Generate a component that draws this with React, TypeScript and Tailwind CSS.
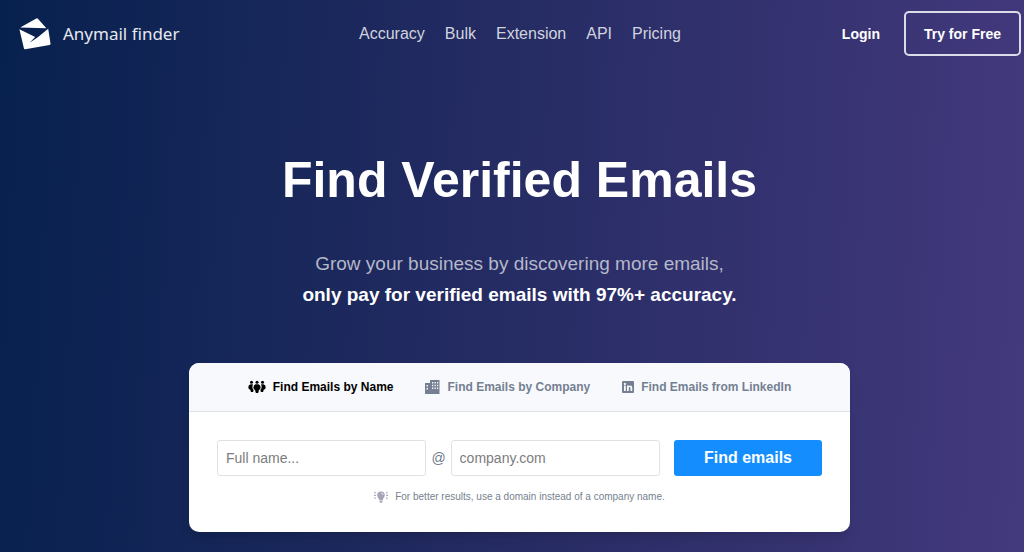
import React from "react";

const navLinks = ["Accuracy", "Bulk", "Extension", "API", "Pricing"];

function LogoMark() {
  return (
    <svg viewBox="0 0 32 32" className="h-8 w-8" fill="#fff" aria-hidden="true">
      <path d="M1.200 9.400 17.300.5q.9-.5 1.600.2L27.400 10.300Z" />
      <path d="M.4 11.200 16.200 19 10.600 24.700 18.800 19.200 29.200 10.800 31.500 25.600Q31.600 26.800 30.600 27L6.200 31.200Q5.100 31.300 4.900 30.300Z" />
    </svg>
  );
}

function PeopleIcon() {
  return (
    <svg viewBox="0 0 18 14" className="h-3.5 w-[18px]" fill="currentColor" aria-hidden="true">
      <circle cx="3.500" cy="2.200" r="1.500" />
      <circle cx="9" cy="2.200" r="1.500" />
      <circle cx="14.500" cy="2.200" r="1.500" />
      <path d="M2.700 4.300h1.800l.5.300q-.6 1-.6 2.400 0 2 1.100 3v1.200L4.700 12H2.900L2.300 9.800Q.3 9.400.3 7.300q0-2.700 2.400-3Z" />
      <path d="M15.300 4.300h-1.800l-.5.300q.6 1 .6 2.400 0 2-1.100 3v1.200l.8.800h1.800l.6-2.200q2-.4 2-2.500 0-2.700-2.400-3Z" />
      <path d="M7.500 4.300h3q2.100.7 2.100 3.200 0 2-1.700 2.600l-.5 2.400-.7.600H8.300l-.7-.6-.5-2.400Q5.400 9.500 5.400 7.500q0-2.500 2.100-3.200Z" />
    </svg>
  );
}

function BuildingIcon() {
  return (
    <svg viewBox="0 0 15 14" className="h-3.5 w-[15px]" fill="currentColor" aria-hidden="true">
      <path
        fillRule="evenodd"
        d="M0 3h5V0h9.500v14H0ZM1.500 5v1.500H3V5ZM1.500 8v1.500H3V8ZM7 2v1.500h1.300V2ZM9.500 2v1.500h1.300V2ZM12 2v1.500h1.200V2ZM7 4.800v1.500h1.300V4.800ZM9.500 4.800v1.500h1.300V4.800ZM12 4.800v1.500h1.200V4.800ZM7 7.600v1.500h1.300V7.600ZM9.500 7.600v1.500h1.300V7.600ZM12 7.600v1.500h1.200V7.600Z"
      />
    </svg>
  );
}

function LinkedInIcon() {
  return (
    <svg viewBox="0 0 24 24" className="h-3 w-3" fill="currentColor" aria-hidden="true">
      <path
        fillRule="evenodd"
        d="M2 0h20q2 0 2 2v20q0 2-2 2H2q-2 0-2-2V2Q0 0 2 0ZM4 9v11h3.500V9ZM5.750 3.600a2.100 2.100 0 1 0 .01 0ZM10 9v11h3.500v-5.600c0-3.200 3.400-3 3.400 0V20h3.600v-6.500c0-5.200-5-5.800-7-3V9Z"
      />
    </svg>
  );
}

function BulbIcon() {
  return (
    <svg viewBox="0 0 14 12" className="h-3 w-3.5" aria-hidden="true">
      <path
        d="M7 .5a3.800 3.800 0 0 0-3.800 3.800C3.200 6.400 5 7.200 5.200 9h3.600c.2-1.800 2-2.600 2-4.700A3.800 3.800 0 0 0 7 .5ZM5.500 9.600h3v.8L7.800 11.700H6.200L5.500 10.400Z"
        fill="#a3a5b5"
      />
      <path
        d="M.4 1.200 2 2M0 4.400h1.800M.4 7.600 2 6.800M13.600 1.200 12 2M14 4.400h-1.800M13.600 7.600 12 6.800"
        stroke="#a3a5b5"
        strokeWidth="1.100"
      />
      <path d="M7.200 2q1.800.2 2 2" stroke="#fff" strokeWidth=".7" fill="none" />
    </svg>
  );
}

const tabs = [
  { label: "Find Emails by Name", icon: <PeopleIcon />, active: true },
  { label: "Find Emails by Company", icon: <BuildingIcon />, active: false },
  { label: "Find Emails from LinkedIn", icon: <LinkedInIcon />, active: false },
];

const field =
  "h-9 w-full min-w-0 rounded-[3px] border border-[#dfe1e5] bg-white px-2 text-sm text-gray-800 placeholder:text-[#7d7d7d] focus:outline-none focus:border-[#148eff]";

export default function App() {
  return (
    <div className="min-h-screen bg-[linear-gradient(93deg,#07214e_0%,#262c64_50%,#43397d_100%)] pb-5 font-['Liberation_Sans',Arial,sans-serif] text-white">
      <header className="grid grid-cols-[1fr_auto_1fr] items-center pt-[11px] pr-[3px] pl-[19px]">
        <a href="#home" className="flex items-center gap-3 justify-self-start">
          <LogoMark />
          <span className="font-['Noto_Sans',sans-serif] text-[17px] leading-6 text-[#e6e8f0]">Anymail finder</span>
        </a>
        <nav className="flex items-center gap-5">
          {navLinks.map((label) => (
            <a key={label} href={`#${label.toLowerCase()}`} className="text-base leading-6 text-[#d1d3df]">
              {label}
            </a>
          ))}
        </nav>
        <div className="flex items-center gap-6 justify-self-end text-sm font-bold">
          <a href="#login">Login</a>
          <a href="#signup" className="flex h-[45px] items-center rounded-[5px] border-2 border-[#dcdbe8] px-[18px]">
            Try for Free
          </a>
        </div>
      </header>

      <main className="pt-[92px] pr-4 pl-[31px]">
        <h1 className="text-center text-[50px] leading-[64px] font-bold">Find Verified Emails</h1>
        <p className="mt-9 text-center text-[19px] leading-[31px] text-[#b5b8c9]">
          Grow your business by discovering more emails,
          <br />
          <strong className="font-bold text-white">only pay for verified emails with 97%+ accuracy.</strong>
        </p>

        <section className="mx-auto mt-[53px] max-w-[661px] overflow-hidden rounded-[10px] bg-white shadow-lg">
          <div role="tablist" className="flex h-[49px] items-center justify-center gap-8 border-b border-[#dde0e5] bg-[#f8f9fd]">
            {tabs.map((tab) => (
              <button
                key={tab.label}
                type="button"
                role="tab"
                aria-selected={tab.active}
                className={`flex items-center gap-[7px] text-xs font-bold ${tab.active ? "text-black" : "text-[#748091]"}`}
              >
                {tab.icon}
                {tab.label}
              </button>
            ))}
          </div>
          <form className="px-7 pt-7 pb-[27px]" onSubmit={(e) => e.preventDefault()}>
            <div className="flex items-center">
              <div className="flex flex-1 items-center gap-[5px]">
                <input type="text" aria-label="Full name" placeholder="Full name..." className={field} />
                <span className="text-sm text-[#6f7b8b]">@</span>
                <input type="text" aria-label="Company domain" placeholder="company.com" className={field} />
              </div>
              <button type="submit" className="ml-3.5 h-9 w-[148px] rounded-[3px] bg-[#148eff] text-base font-bold text-white">
                Find emails
              </button>
            </div>
            <p className="mt-[13px] flex items-center justify-center gap-[7px] text-[10px] leading-4 text-[#76828f]">
              <BulbIcon />
              For better results, use a domain instead of a company name.
            </p>
          </form>
        </section>
      </main>
    </div>
  );
}
